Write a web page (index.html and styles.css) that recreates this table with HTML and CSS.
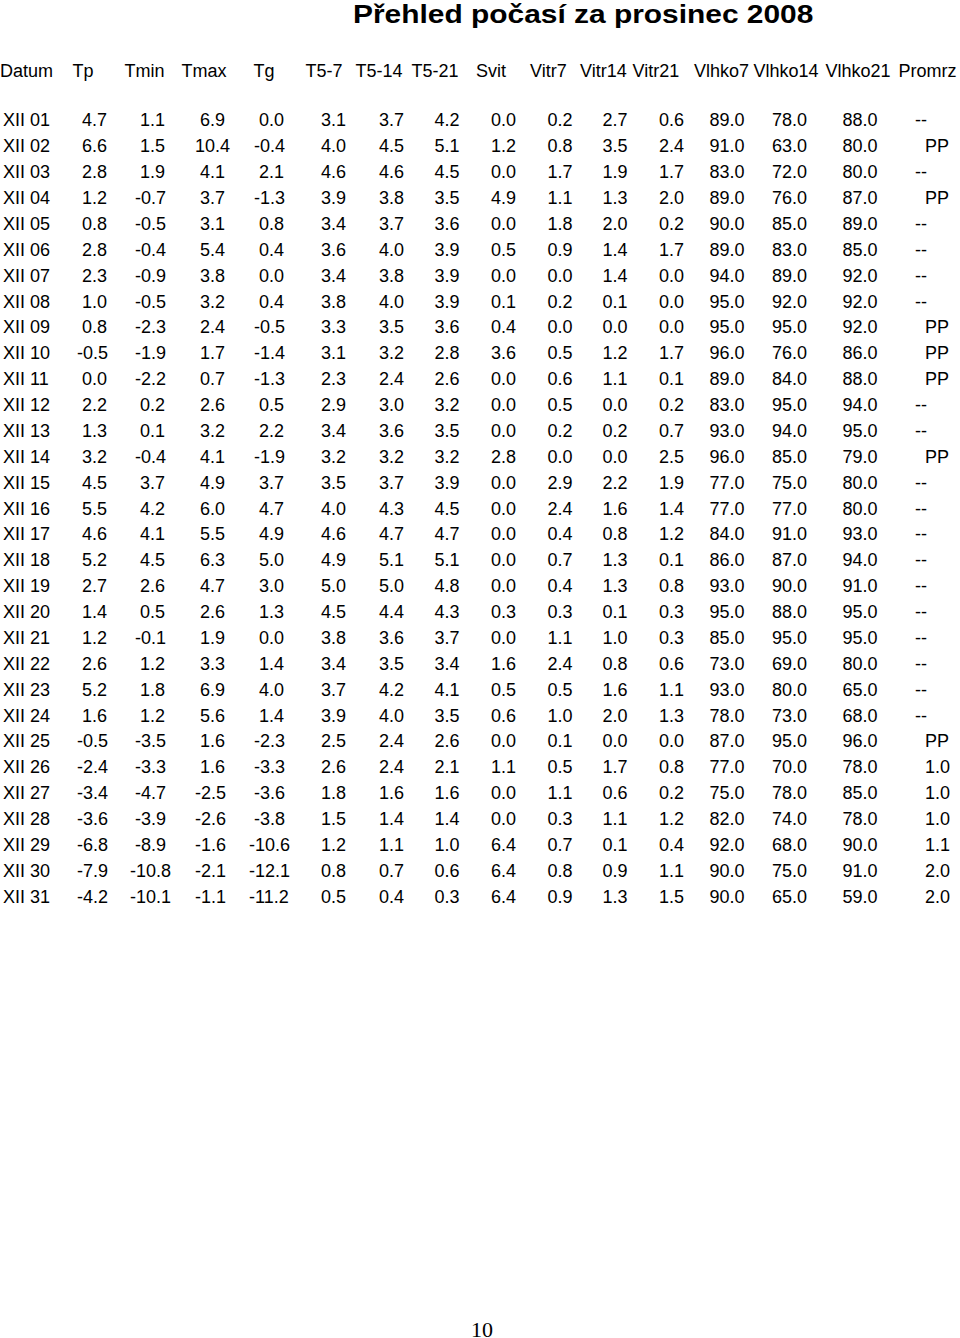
FILE: index.html
```html
<!DOCTYPE html>
<html lang="cs">
<head>
<meta charset="utf-8">
<title>Přehled počasí za prosinec 2008</title>
<link rel="stylesheet" href="styles.css">
</head>
<body>
<div class="page">
  <h1 class="title">Přehled počasí za prosinec 2008</h1>
  <div class="head">
    <span>Datum</span><span>Tp</span><span>Tmin</span><span>Tmax</span><span>Tg</span><span>T5-7</span><span>T5-14</span><span>T5-21</span><span>Svit</span><span>Vitr7</span><span>Vitr14</span><span>Vitr21</span><span>Vlhko7</span><span>Vlhko14</span><span>Vlhko21</span><span>Promrz</span>
  </div>
  <div class="table">
    <div class="row"><span class="date">XII 01</span><span> 4.7</span><span>  1.1</span><span> 6.9</span><span>  0.0</span><span>3.1</span><span>3.7</span><span>4.2</span><span>0.0</span><span>0.2</span><span>2.7</span><span>0.6</span><span>89.0</span><span>78.0</span><span>88.0</span><span>--</span></div>
    <div class="row"><span class="date">XII 02</span><span> 6.6</span><span>  1.5</span><span>10.4</span><span> -0.4</span><span>4.0</span><span>4.5</span><span>5.1</span><span>1.2</span><span>0.8</span><span>3.5</span><span>2.4</span><span>91.0</span><span>63.0</span><span>80.0</span><span>  PP</span></div>
    <div class="row"><span class="date">XII 03</span><span> 2.8</span><span>  1.9</span><span> 4.1</span><span>  2.1</span><span>4.6</span><span>4.6</span><span>4.5</span><span>0.0</span><span>1.7</span><span>1.9</span><span>1.7</span><span>83.0</span><span>72.0</span><span>80.0</span><span>--</span></div>
    <div class="row"><span class="date">XII 04</span><span> 1.2</span><span> -0.7</span><span> 3.7</span><span> -1.3</span><span>3.9</span><span>3.8</span><span>3.5</span><span>4.9</span><span>1.1</span><span>1.3</span><span>2.0</span><span>89.0</span><span>76.0</span><span>87.0</span><span>  PP</span></div>
    <div class="row"><span class="date">XII 05</span><span> 0.8</span><span> -0.5</span><span> 3.1</span><span>  0.8</span><span>3.4</span><span>3.7</span><span>3.6</span><span>0.0</span><span>1.8</span><span>2.0</span><span>0.2</span><span>90.0</span><span>85.0</span><span>89.0</span><span>--</span></div>
    <div class="row"><span class="date">XII 06</span><span> 2.8</span><span> -0.4</span><span> 5.4</span><span>  0.4</span><span>3.6</span><span>4.0</span><span>3.9</span><span>0.5</span><span>0.9</span><span>1.4</span><span>1.7</span><span>89.0</span><span>83.0</span><span>85.0</span><span>--</span></div>
    <div class="row"><span class="date">XII 07</span><span> 2.3</span><span> -0.9</span><span> 3.8</span><span>  0.0</span><span>3.4</span><span>3.8</span><span>3.9</span><span>0.0</span><span>0.0</span><span>1.4</span><span>0.0</span><span>94.0</span><span>89.0</span><span>92.0</span><span>--</span></div>
    <div class="row"><span class="date">XII 08</span><span> 1.0</span><span> -0.5</span><span> 3.2</span><span>  0.4</span><span>3.8</span><span>4.0</span><span>3.9</span><span>0.1</span><span>0.2</span><span>0.1</span><span>0.0</span><span>95.0</span><span>92.0</span><span>92.0</span><span>--</span></div>
    <div class="row"><span class="date">XII 09</span><span> 0.8</span><span> -2.3</span><span> 2.4</span><span> -0.5</span><span>3.3</span><span>3.5</span><span>3.6</span><span>0.4</span><span>0.0</span><span>0.0</span><span>0.0</span><span>95.0</span><span>95.0</span><span>92.0</span><span>  PP</span></div>
    <div class="row"><span class="date">XII 10</span><span>-0.5</span><span> -1.9</span><span> 1.7</span><span> -1.4</span><span>3.1</span><span>3.2</span><span>2.8</span><span>3.6</span><span>0.5</span><span>1.2</span><span>1.7</span><span>96.0</span><span>76.0</span><span>86.0</span><span>  PP</span></div>
    <div class="row"><span class="date">XII 11</span><span> 0.0</span><span> -2.2</span><span> 0.7</span><span> -1.3</span><span>2.3</span><span>2.4</span><span>2.6</span><span>0.0</span><span>0.6</span><span>1.1</span><span>0.1</span><span>89.0</span><span>84.0</span><span>88.0</span><span>  PP</span></div>
    <div class="row"><span class="date">XII 12</span><span> 2.2</span><span>  0.2</span><span> 2.6</span><span>  0.5</span><span>2.9</span><span>3.0</span><span>3.2</span><span>0.0</span><span>0.5</span><span>0.0</span><span>0.2</span><span>83.0</span><span>95.0</span><span>94.0</span><span>--</span></div>
    <div class="row"><span class="date">XII 13</span><span> 1.3</span><span>  0.1</span><span> 3.2</span><span>  2.2</span><span>3.4</span><span>3.6</span><span>3.5</span><span>0.0</span><span>0.2</span><span>0.2</span><span>0.7</span><span>93.0</span><span>94.0</span><span>95.0</span><span>--</span></div>
    <div class="row"><span class="date">XII 14</span><span> 3.2</span><span> -0.4</span><span> 4.1</span><span> -1.9</span><span>3.2</span><span>3.2</span><span>3.2</span><span>2.8</span><span>0.0</span><span>0.0</span><span>2.5</span><span>96.0</span><span>85.0</span><span>79.0</span><span>  PP</span></div>
    <div class="row"><span class="date">XII 15</span><span> 4.5</span><span>  3.7</span><span> 4.9</span><span>  3.7</span><span>3.5</span><span>3.7</span><span>3.9</span><span>0.0</span><span>2.9</span><span>2.2</span><span>1.9</span><span>77.0</span><span>75.0</span><span>80.0</span><span>--</span></div>
    <div class="row"><span class="date">XII 16</span><span> 5.5</span><span>  4.2</span><span> 6.0</span><span>  4.7</span><span>4.0</span><span>4.3</span><span>4.5</span><span>0.0</span><span>2.4</span><span>1.6</span><span>1.4</span><span>77.0</span><span>77.0</span><span>80.0</span><span>--</span></div>
    <div class="row"><span class="date">XII 17</span><span> 4.6</span><span>  4.1</span><span> 5.5</span><span>  4.9</span><span>4.6</span><span>4.7</span><span>4.7</span><span>0.0</span><span>0.4</span><span>0.8</span><span>1.2</span><span>84.0</span><span>91.0</span><span>93.0</span><span>--</span></div>
    <div class="row"><span class="date">XII 18</span><span> 5.2</span><span>  4.5</span><span> 6.3</span><span>  5.0</span><span>4.9</span><span>5.1</span><span>5.1</span><span>0.0</span><span>0.7</span><span>1.3</span><span>0.1</span><span>86.0</span><span>87.0</span><span>94.0</span><span>--</span></div>
    <div class="row"><span class="date">XII 19</span><span> 2.7</span><span>  2.6</span><span> 4.7</span><span>  3.0</span><span>5.0</span><span>5.0</span><span>4.8</span><span>0.0</span><span>0.4</span><span>1.3</span><span>0.8</span><span>93.0</span><span>90.0</span><span>91.0</span><span>--</span></div>
    <div class="row"><span class="date">XII 20</span><span> 1.4</span><span>  0.5</span><span> 2.6</span><span>  1.3</span><span>4.5</span><span>4.4</span><span>4.3</span><span>0.3</span><span>0.3</span><span>0.1</span><span>0.3</span><span>95.0</span><span>88.0</span><span>95.0</span><span>--</span></div>
    <div class="row"><span class="date">XII 21</span><span> 1.2</span><span> -0.1</span><span> 1.9</span><span>  0.0</span><span>3.8</span><span>3.6</span><span>3.7</span><span>0.0</span><span>1.1</span><span>1.0</span><span>0.3</span><span>85.0</span><span>95.0</span><span>95.0</span><span>--</span></div>
    <div class="row"><span class="date">XII 22</span><span> 2.6</span><span>  1.2</span><span> 3.3</span><span>  1.4</span><span>3.4</span><span>3.5</span><span>3.4</span><span>1.6</span><span>2.4</span><span>0.8</span><span>0.6</span><span>73.0</span><span>69.0</span><span>80.0</span><span>--</span></div>
    <div class="row"><span class="date">XII 23</span><span> 5.2</span><span>  1.8</span><span> 6.9</span><span>  4.0</span><span>3.7</span><span>4.2</span><span>4.1</span><span>0.5</span><span>0.5</span><span>1.6</span><span>1.1</span><span>93.0</span><span>80.0</span><span>65.0</span><span>--</span></div>
    <div class="row"><span class="date">XII 24</span><span> 1.6</span><span>  1.2</span><span> 5.6</span><span>  1.4</span><span>3.9</span><span>4.0</span><span>3.5</span><span>0.6</span><span>1.0</span><span>2.0</span><span>1.3</span><span>78.0</span><span>73.0</span><span>68.0</span><span>--</span></div>
    <div class="row"><span class="date">XII 25</span><span>-0.5</span><span> -3.5</span><span> 1.6</span><span> -2.3</span><span>2.5</span><span>2.4</span><span>2.6</span><span>0.0</span><span>0.1</span><span>0.0</span><span>0.0</span><span>87.0</span><span>95.0</span><span>96.0</span><span>  PP</span></div>
    <div class="row"><span class="date">XII 26</span><span>-2.4</span><span> -3.3</span><span> 1.6</span><span> -3.3</span><span>2.6</span><span>2.4</span><span>2.1</span><span>1.1</span><span>0.5</span><span>1.7</span><span>0.8</span><span>77.0</span><span>70.0</span><span>78.0</span><span>  1.0</span></div>
    <div class="row"><span class="date">XII 27</span><span>-3.4</span><span> -4.7</span><span>-2.5</span><span> -3.6</span><span>1.8</span><span>1.6</span><span>1.6</span><span>0.0</span><span>1.1</span><span>0.6</span><span>0.2</span><span>75.0</span><span>78.0</span><span>85.0</span><span>  1.0</span></div>
    <div class="row"><span class="date">XII 28</span><span>-3.6</span><span> -3.9</span><span>-2.6</span><span> -3.8</span><span>1.5</span><span>1.4</span><span>1.4</span><span>0.0</span><span>0.3</span><span>1.1</span><span>1.2</span><span>82.0</span><span>74.0</span><span>78.0</span><span>  1.0</span></div>
    <div class="row"><span class="date">XII 29</span><span>-6.8</span><span> -8.9</span><span>-1.6</span><span>-10.6</span><span>1.2</span><span>1.1</span><span>1.0</span><span>6.4</span><span>0.7</span><span>0.1</span><span>0.4</span><span>92.0</span><span>68.0</span><span>90.0</span><span>  1.1</span></div>
    <div class="row"><span class="date">XII 30</span><span>-7.9</span><span>-10.8</span><span>-2.1</span><span>-12.1</span><span>0.8</span><span>0.7</span><span>0.6</span><span>6.4</span><span>0.8</span><span>0.9</span><span>1.1</span><span>90.0</span><span>75.0</span><span>91.0</span><span>  2.0</span></div>
    <div class="row"><span class="date">XII 31</span><span>-4.2</span><span>-10.1</span><span>-1.1</span><span>-11.2</span><span>0.5</span><span>0.4</span><span>0.3</span><span>6.4</span><span>0.9</span><span>1.3</span><span>1.5</span><span>90.0</span><span>65.0</span><span>59.0</span><span>  2.0</span></div>
  </div>
  <div class="folio">10</div>
</div>
</body>
</html>
```

FILE: styles.css
```css
html,
body {
  margin: 0;
  padding: 0;
  background: #ffffff;
}

.page {
  height: 1338px;
  display: flex;
  flex-direction: column;
  overflow: hidden;
  font-family: "Liberation Sans", Arial, sans-serif;
  color: #000000;
}

.title {
  margin: 0;
  padding-left: 353px;
  font-size: 26px;
  font-weight: bold;
  line-height: 28px;
  transform: scaleX(1.15);
  transform-origin: 353px 0;
  white-space: nowrap;
}

.head {
  display: grid;
  grid-template-columns: 72.6px 52px 57px 72px 52px 50px 56px 64.4px 54px 50px 52.5px 61.5px 59.5px 72px 73px 1fr;
  margin-top: 30.5px;
  font-size: 18px;
  line-height: 25.88px;
  white-space: nowrap;
}

.table {
  margin-top: 24.1px;
}

.row {
  display: grid;
  grid-template-columns: 77px 53px 65px 54px 72px 58px 55.5px 56.5px 56.5px 55px 56.5px 50.5px 62.5px 70.5px 72.5px 1fr;
  font-size: 18px;
  line-height: 25.88px;
  white-space: pre;
}

.date {
  padding-left: 3px;
}

.folio {
  margin-top: auto;
  padding-left: 4px;
  text-align: center;
  font-family: "Liberation Serif", "Times New Roman", serif;
  font-size: 22px;
  line-height: 17px;
}
```
